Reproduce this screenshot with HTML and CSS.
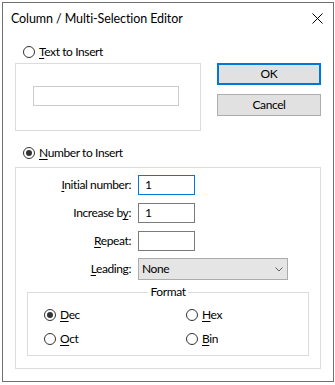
FILE: index.html
```html
<!DOCTYPE html>
<html>
<head>
<meta charset="utf-8">
<link rel="stylesheet" href="styles.css">
</head>
<body>
<div class="dialog">
  <div class="titlebar">
    <span class="title">Column / Multi-Selection Editor</span>
    <svg class="close" width="11" height="11" viewBox="0 0 11 11"><path d="M0.5 0.5 L10.5 10.5 M10.5 0.5 L0.5 10.5" stroke="#000" stroke-width="1" fill="none"/></svg>
  </div>
  <div class="content">
    <div class="top">
      <div class="left">
        <div class="radio-row"><span class="radio"></span><span><u>T</u>ext to Insert</span></div>
        <div class="group group-text"><div class="textbox"></div></div>
      </div>
      <div class="buttons">
        <div class="btn btn-default">OK</div>
        <div class="btn">Cancel</div>
      </div>
    </div>
    <div class="radio-row radio-number"><span class="radio checked"></span><span><u>N</u>umber to Insert</span></div>
    <div class="group group-number">
      <div class="form-grid">
        <span class="lbl"><u>I</u>nitial number:</span><div class="field focus">1</div>
        <span class="lbl">Increase b<u>y</u>:</span><div class="field">1</div>
        <span class="lbl"><u>R</u>epeat:</span><div class="field"></div>
        <span class="lbl lbl-combo"><u>L</u>eading:</span>
        <div class="combo"><span>None</span><svg width="8" height="5" viewBox="0 0 8 5"><path d="M0.5 0.5 L4 4 L7.5 0.5" stroke="#606060" stroke-width="1" fill="none"/></svg></div>
      </div>
      <fieldset class="format">
        <legend>Format</legend>
        <div class="format-grid">
          <div class="radio-row"><span class="radio checked"></span><span><u>D</u>ec</span></div>
          <div class="radio-row"><span class="radio"></span><span><u>H</u>ex</span></div>
          <div class="radio-row"><span class="radio"></span><span><u>O</u>ct</span></div>
          <div class="radio-row"><span class="radio"></span><span><u>B</u>in</span></div>
        </div>
      </fieldset>
    </div>
  </div>
</div>
</body>
</html>
```
FILE: styles.css
```css
html, body {
  margin: 0;
  padding: 0;
  background: #ffffff;
}
body {
  font-family: "Lato", "Noto Sans", sans-serif;
  font-size: 12px;
  line-height: 16px;
  letter-spacing: -0.4px;
  color: #000;
}
u {
  text-decoration: underline;
  text-underline-offset: 2px;
  text-decoration-thickness: 1px;
}
.dialog {
  margin: 2px 0 0 2px;
  width: 332px;
  height: 380px;
  box-sizing: border-box;
  border: 1px solid #707070;
  background: #fff;
}
.titlebar {
  height: 30px;
  box-sizing: border-box;
  display: flex;
  align-items: flex-start;
  padding: 8px 0 0 8px;
}
.title {
  flex: 1;
  font-size: 12.5px;
  letter-spacing: -0.1px;
}
.close {
  margin: 2px 10px 0 0;
}
.content {
  padding: 11px 11px 0 12px;
}
.top {
  display: flex;
  align-items: flex-start;
}
.left {
  width: 186px;
}
.radio-row {
  display: flex;
  align-items: center;
  height: 16px;
  gap: 4px;
  padding-left: 8px;
}
.radio {
  width: 12px;
  height: 12px;
  box-sizing: border-box;
  border: 1px solid #333;
  border-radius: 50%;
  display: flex;
  align-items: center;
  justify-content: center;
  flex: none;
}
.radio.checked::after {
  content: "";
  width: 6px;
  height: 6px;
  border-radius: 50%;
  background: #333;
}
.group {
  border: 1px solid #dcdcdc;
  box-sizing: border-box;
}
.group-text {
  margin-top: 3px;
  height: 68px;
  padding: 22px 0 0 17px;
}
.textbox {
  width: 146px;
  height: 20px;
  box-sizing: border-box;
  border: 1px solid #cccccc;
}
.buttons {
  margin: 19px 0 0 16px;
  width: 104px;
  display: flex;
  flex-direction: column;
  gap: 9px;
}
.btn {
  height: 22px;
  box-sizing: border-box;
  border: 1px solid #adadad;
  background: #e1e1e1;
  display: flex;
  align-items: center;
  justify-content: center;
}
.btn-default {
  border: 2px solid #0078d7;
}
.radio-number {
  margin-top: 14px;
}
.group-number {
  margin-top: 6px;
  width: 306px;
  height: 202px;
  padding: 7px 0 0 0;
}
.form-grid {
  display: grid;
  grid-template-columns: 115px auto;
  column-gap: 7px;
  row-gap: 8px;
  align-items: center;
}
.lbl {
  text-align: right;
}
.lbl-combo {
  margin-top: -1px;
}
.field {
  width: 57px;
  height: 20px;
  box-sizing: border-box;
  border: 1px solid #7a7a7a;
  padding-left: 6px;
  line-height: 18px;
}
.field.focus {
  border-color: #0078d7;
}
.combo {
  margin-top: -1px;
  width: 150px;
  height: 22px;
  box-sizing: border-box;
  border: 1px solid #acacac;
  background: #e5e5e5;
  display: flex;
  align-items: center;
  justify-content: space-between;
  padding: 0 4px 0 3px;
}
.format {
  margin: 4px 0 0 11px;
  width: 282px;
  box-sizing: border-box;
  border: 1px solid #dcdcdc;
  padding: 7px 0 8px 0;
  min-width: 0;
}
.format legend {
  margin: 0 auto;
  padding: 0 2px;
  line-height: 16px;
}
.format-grid {
  display: grid;
  grid-template-columns: 142px auto;
  row-gap: 8px;
  padding-left: 16px;
}
.format-grid .radio-row {
  padding-left: 0;
}
```
